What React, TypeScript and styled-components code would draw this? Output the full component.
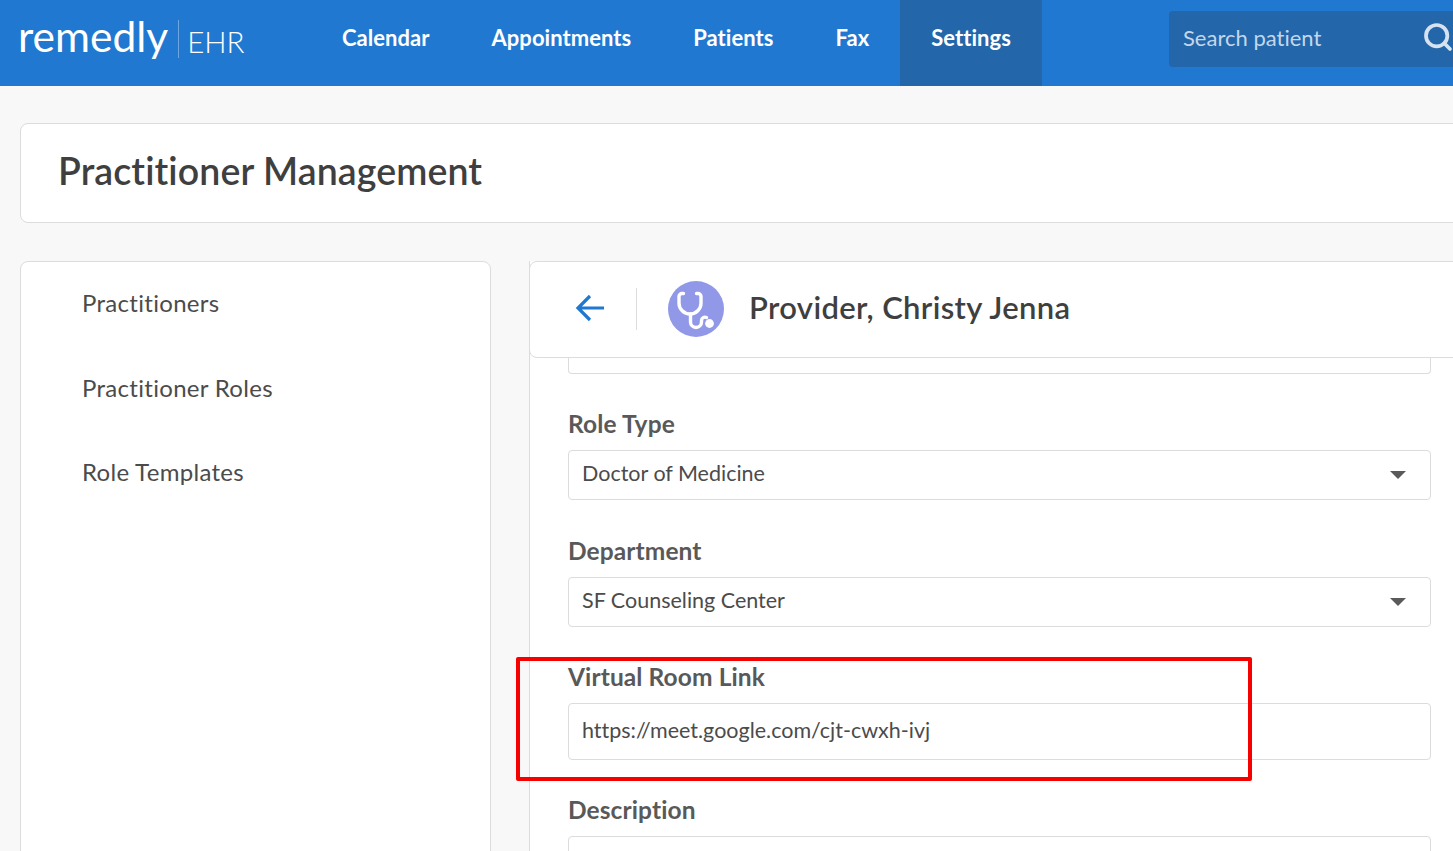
import { FiSearch } from 'react-icons/fi';
import styled, { createGlobalStyle } from 'styled-components';

const GlobalStyle = createGlobalStyle`
  html, body {
    margin: 0;
    height: 100%;
    overflow: hidden;
    background: #f8f8f8;
    font-family: Lato, "Liberation Sans", sans-serif;
    font-variant-ligatures: none;
  }
  * {
    box-sizing: border-box;
  }
`;

const Page = styled.div`
  position: relative;
  width: 1453px;
  height: 851px;
  overflow: hidden;
`;

const TopBar = styled.header`
  display: flex;
  height: 86px;
  background: #2178d1;
  color: #fff;
`;

const Logo = styled.div`
  display: flex;
  align-items: center;
  width: 311px;
  padding: 0 0 8px 18px;
  flex-shrink: 0;
`;

const LogoName = styled.span`
  font-size: 42.5px;
  font-weight: 400;
  line-height: 40px;
  margin-top: -6px;
`;

const LogoDivider = styled.span`
  width: 1px;
  height: 38px;
  margin: 0 8px 0 10px;
  background: #6ea6e2;
`;

const LogoProduct = styled.span`
  font-size: 29.5px;
  font-weight: 300;
  margin-top: 4px;
`;

const Nav = styled.nav`
  display: flex;
  height: 100%;
`;

const NavItem = styled.a<{ $active?: boolean }>`
  display: flex;
  align-items: center;
  padding: 0 31px 11px;
  font-size: 22px;
  font-weight: 700;
  letter-spacing: 0.04px;
  background: ${props => (props.$active ? '#2366a9' : 'transparent')};
`;

const Search = styled.div`
  display: flex;
  align-items: center;
  justify-content: space-between;
  width: 284px;
  height: 56px;
  margin: 11px 0 0 auto;
  padding: 0 0 4px 14px;
  flex-shrink: 0;
  border-radius: 4px 0 0 4px;
  background: #2366a9;
  color: #c3d7ec;
  font-size: 22px;
`;

const SearchIcon = styled(FiSearch)`
  flex-shrink: 0;
  width: 32px;
  height: 32px;
  margin-right: -1px;
  stroke-width: 2.8;
  color: #d5e2f0;
`;

const Content = styled.main`
  padding: 37px 0 0 20px;
`;

const TitleCard = styled.section`
  display: flex;
  align-items: center;
  width: 1500px;
  height: 100px;
  padding: 0 0 5px 37px;
  background: #fff;
  border: 1px solid #dcdcdc;
  border-radius: 8px;
`;

const Title = styled.h1`
  margin: 0;
  color: #3f3f3f;
  font-size: 37.5px;
  font-weight: 600;
  letter-spacing: 0.1px;
`;

const Columns = styled.div`
  display: flex;
  gap: 38px;
  margin-top: 38px;
`;

const Sidebar = styled.aside`
  display: flex;
  flex-direction: column;
  gap: 57.5px;
  width: 471px;
  height: 640px;
  flex-shrink: 0;
  padding: 27px 0 0 61px;
  background: #fff;
  border: 1px solid #dcdcdc;
  border-radius: 8px;
`;

const SideLink = styled.a`
  color: #4b4b4b;
  font-size: 24px;
  letter-spacing: 0.3px;
  line-height: 27px;
`;

const Detail = styled.section`
  width: 1000px;
  flex-shrink: 0;
  height: 640px;
  background: #fff;
  border-left: 1px solid #dcdcdc;
`;

const DetailHeader = styled.div`
  position: relative;
  z-index: 1;
  display: flex;
  align-items: center;
  height: 97px;
  margin-left: -1px;
  padding: 0 0 1px 45px;
  background: #fff;
  border: 1px solid #dcdcdc;
  border-radius: 8px;
`;

const BackArrow = styled.svg`
  margin-bottom: 2px;
`;

const HeaderDivider = styled.span`
  width: 1px;
  height: 42px;
  margin: 0 31px 0 31px;
  background: #dcdcdc;
`;

const Avatar = styled.span`
  display: flex;
  width: 56px;
  height: 56px;
  border-radius: 50%;
  background: #9198e8;
`;

const ProviderName = styled.h2`
  margin: 0 0 4px 25px;
  color: #3f3f3f;
  font-size: 31px;
  font-weight: 600;
  letter-spacing: 0.35px;
`;

const Form = styled.div`
  width: 901px;
  margin-top: -1px;
  padding-left: 38px;
`;

const ClippedField = styled.div`
  height: 17px;
  border: 1px solid #dcdcdc;
  border-top: 0;
  border-radius: 0 0 4px 4px;
`;

const Label = styled.label`
  display: block;
  margin-bottom: 12px;
  color: #595959;
  font-size: 24.5px;
  font-weight: 700;
  letter-spacing: 0.1px;
  line-height: 28px;
`;

const FieldBlock = styled.div<{ $gap: number }>`
  margin-top: ${props => props.$gap}px;
`;

const Field = styled.div<{ $height: number }>`
  display: flex;
  align-items: center;
  justify-content: space-between;
  height: ${props => props.$height}px;
  padding: 0 24px 4px 13px;
  border: 1px solid #dcdcdc;
  border-radius: 4px;
  color: #4b4b4b;
  font-size: 21.5px;
`;

const Caret = styled.span`
  width: 0;
  height: 0;
  margin-top: 4px;
  border-left: 8px solid transparent;
  border-right: 8px solid transparent;
  border-top: 8px solid #5a5a5a;
`;

const Highlight = styled.div`
  position: absolute;
  left: 516px;
  top: 657px;
  width: 736px;
  height: 124px;
  border: 4px solid #f60000;
  border-radius: 2px;
`;

export default function App() {
  return (
    <Page>
      <GlobalStyle />
      <TopBar>
        <Logo>
          <LogoName>remedly</LogoName>
          <LogoDivider />
          <LogoProduct>EHR</LogoProduct>
        </Logo>
        <Nav>
          <NavItem>Calendar</NavItem>
          <NavItem>Appointments</NavItem>
          <NavItem>Patients</NavItem>
          <NavItem>Fax</NavItem>
          <NavItem $active>Settings</NavItem>
        </Nav>
        <Search>
          <span>Search patient</span>
          <SearchIcon />
        </Search>
      </TopBar>
      <Content>
        <TitleCard>
          <Title>Practitioner Management</Title>
        </TitleCard>
        <Columns>
          <Sidebar>
            <SideLink>Practitioners</SideLink>
            <SideLink>Practitioner Roles</SideLink>
            <SideLink>Role Templates</SideLink>
          </Sidebar>
          <Detail>
            <DetailHeader>
              <BackArrow width="30" height="28" viewBox="0 0 30 28" fill="none" stroke="#2178d1" strokeWidth="3.2">
                <path d="M29 14H3M15 2 3 14l12 12" />
              </BackArrow>
              <HeaderDivider />
              <Avatar>
                <svg width="56" height="56" viewBox="0 0 56 56" fill="none" stroke="#fff" strokeWidth="3.4" strokeLinecap="round">
                  <path d="M15.5 12.5H14a3 3 0 0 0-3 3v6.5a11 11 0 0 0 22 0v-6.5a3 3 0 0 0-3-3h-1.5" />
                  <path d="M22.5 33v8a5.5 5.5 0 0 0 11 0v-1.5a3.5 3.5 0 0 1 5-3" />
                  <circle cx="41.5" cy="42.5" r="4.4" fill="#fff" stroke="none" />
                </svg>
              </Avatar>
              <ProviderName>Provider, Christy Jenna</ProviderName>
            </DetailHeader>
            <Form>
              <ClippedField />
              <FieldBlock $gap={36}>
                <Label>Role Type</Label>
                <Field $height={50}>
                  Doctor of Medicine
                  <Caret />
                </Field>
              </FieldBlock>
              <FieldBlock $gap={37}>
                <Label>Department</Label>
                <Field $height={50}>
                  SF Counseling Center
                  <Caret />
                </Field>
              </FieldBlock>
              <FieldBlock $gap={36}>
                <Label>Virtual Room Link</Label>
                <Field $height={57}>https://meet.google.com/cjt-cwxh-ivj</Field>
              </FieldBlock>
              <FieldBlock $gap={36}>
                <Label>Description</Label>
                <Field $height={57} />
              </FieldBlock>
            </Form>
          </Detail>
        </Columns>
      </Content>
      <Highlight />
    </Page>
  );
}
